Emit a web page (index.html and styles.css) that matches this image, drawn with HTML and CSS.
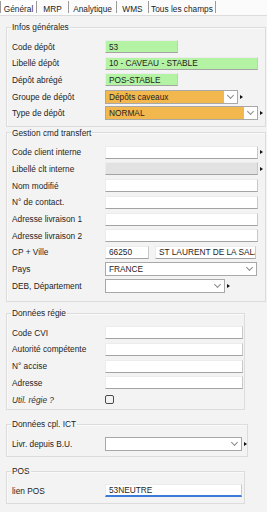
FILE: index.html
```html
<!DOCTYPE html>
<html>
    <head>
        <title>Dépôt</title>
        <link rel="stylesheet" href="styles.css">
    </head>
    <body>
        <div class="tabs">
            <span class="tab active t-gen">Général</span>
            <span class="tab t-mrp">MRP</span>
            <span class="tab t-ana">Analytique</span>
            <span class="tab t-wms">WMS</span>
            <span class="tab t-all">Tous les champs</span>
        </div>

        <div class="panel">
            <fieldset class="group group-1">
                <legend>Infos générales</legend>
                <div class="row"><label>Code dépôt</label><input class="inp green w-73" value="53"></div>
                <div class="row"><label>Libellé dépôt</label><input class="inp green w-153" value="10 - CAVEAU - STABLE"></div>
                <div class="row"><label>Dépôt abrégé</label><input class="inp green w-73" value="POS-STABLE"></div>
                <div class="row"><label>Groupe de dépôt</label><div class="sel orange w-133"><span>Dépôts caveaux</span><i class="chev"></i></div><b class="mark"></b></div>
                <div class="row"><label>Type de dépôt</label><div class="sel orange w-153"><span>NORMAL</span><i class="chev"></i></div><b class="mark"></b></div>
            </fieldset>

            <fieldset class="group group-2">
                <legend>Gestion cmd transfert</legend>
                <div class="row"><label>Code client interne</label><input class="inp w-153"><b class="mark"></b></div>
                <div class="row"><label>Libellé clt interne</label><input class="inp grey w-153" disabled><b class="mark"></b></div>
                <div class="row"><label>Nom modifié</label><input class="inp w-153"></div>
                <div class="row"><label>N° de contact.</label><input class="inp w-153"></div>
                <div class="row"><label>Adresse livraison 1</label><input class="inp w-153"></div>
                <div class="row"><label>Adresse livraison 2</label><input class="inp w-153"></div>
                <div class="row"><label>CP + Ville</label><input class="inp w-44" value="66250"><input class="inp w-101 ville" value="ST LAURENT DE LA SALANQUE"></div>
                <div class="row"><label>Pays</label><div class="sel w-152"><span>FRANCE</span><i class="chev"></i></div></div>
                <div class="row"><label>DEB, Département</label><div class="sel w-120"><span></span><i class="chev"></i></div><b class="mark"></b></div>
            </fieldset>

            <fieldset class="group group-3 narrow">
                <legend>Données régie</legend>
                <div class="row"><label>Code CVI</label><input class="inp w-138"></div>
                <div class="row"><label>Autorité compétente</label><input class="inp w-138"></div>
                <div class="row"><label>N° accise</label><input class="inp w-138"></div>
                <div class="row"><label>Adresse</label><input class="inp w-138"></div>
                <div class="row"><label class="ital">Util. régie ?</label><span class="check"></span></div>
            </fieldset>

            <fieldset class="group group-4 narrow">
                <legend>Données cpl. ICT</legend>
                <div class="row"><label>Livr. depuis B.U.</label><div class="sel w-137"><span></span><i class="chev"></i></div><b class="mark"></b></div>
            </fieldset>

            <fieldset class="group group-5 narrow">
                <legend>POS</legend>
                <div class="row"><label>lien POS</label><input class="inp focus w-137" value="53NEUTRE"></div>
            </fieldset>
        </div>
    </body>
</html>
```

FILE: styles.css
```css
body {
    margin: 0;
    font-family: "Liberation Sans", Arial, sans-serif;
    font-size: 8.3px;
    color: #1e1e1e;
    background-color: #f3f3f3;
    width: 267px;
    height: 512px;
    overflow: hidden;
}
.tabs {
    display: flex;
    height: 15px;
    background-color: #fbfbfb;
    border-bottom: 1px solid #dcdcdc;
}
.tab {
    box-sizing: border-box;
    text-align: center;
    padding-top: 3px;
    border-right: 1px solid #9a9a9a;
    line-height: 10px;
    height: 12px;
    margin-top: 1px;
    white-space: nowrap;
}
.tab.active {
    background-color: #ffffff;
    border-left: 1px solid #9a9a9a;
}
.t-gen { width: 37px; }
.t-mrp { width: 32px; }
.t-ana { width: 48px; }
.t-wms { width: 32px; }
.t-all { width: 67px; }

.panel {
    padding: 6px 0 0 6px;
}
.group {
    margin: 0 1px 0 0;
    padding: 8px 0 6px 5px;
    border: 1px solid #dcdcdc;
    box-shadow: inset 1px 1px 0 #fafafa;
}
.group legend {
    padding: 0 1px;
    margin-left: -1px;
    line-height: 10px;
}
.group-2 { margin-top: 1px; padding-bottom: 9px; }
.group-3 { margin-top: 6px; padding-bottom: 3px; }
.group-4, .group-5 { margin-top: 9px; }
.narrow { width: 239px; box-sizing: border-box; }

.row {
    display: flex;
    align-items: center;
    height: 13px;
    margin-bottom: 3.7px;
}
.row:last-child { margin-bottom: 0; }
.row label {
    width: 93px;
    flex: none;
    white-space: nowrap;
}
.ital { font-style: italic; color: #333; }

.inp {
    box-sizing: border-box;
    height: 13px;
    margin: 0;
    padding: 0 0 0 3px;
    font-family: inherit;
    font-size: 8.3px;
    color: #1e1e1e;
    background-color: #ffffff;
    border: 1px solid #ececec;
    border-bottom-color: #a3a3a3;
    border-right-color: #c8c8c8;
    outline: none;
}
.inp.green { background-color: #b4f2a4; }
.inp.grey { background-color: #e2e2e2; }
.inp.focus { border-bottom: 2px solid #3b7ad9; }
.ville { margin-left: 6px; padding-left: 3px; }

.sel {
    box-sizing: border-box;
    height: 14px;
    display: flex;
    border: 1px solid #a8a8a8;
    background-color: #ffffff;
}
.sel span {
    flex: 1;
    padding-left: 3px;
    line-height: 12px;
}
.sel.orange span { background-color: #f2b84e; }
.chev {
    width: 13px;
    flex: none;
    position: relative;
}
.chev::after {
    content: "";
    position: absolute;
    left: 4px;
    top: 2px;
    width: 4px;
    height: 4px;
    border-right: 1px solid #8a8a8a;
    border-bottom: 1px solid #8a8a8a;
    transform: rotate(45deg);
}
.mark {
    width: 0;
    height: 0;
    margin-left: 2px;
    border-left: 3px solid #111;
    border-top: 2px solid transparent;
    border-bottom: 2px solid transparent;
}
.check {
    width: 9px;
    height: 9px;
    box-sizing: border-box;
    border: 1px solid #4a4a4a;
    border-radius: 2px;
}

.w-44 { width: 44px; }
.w-73 { width: 73px; }
.w-101 { width: 101px; }
.w-120 { width: 120px; }
.w-133 { width: 133px; }
.w-137 { width: 137px; }
.w-138 { width: 138px; }
.w-152 { width: 152px; }
.w-153 { width: 153px; }
```
